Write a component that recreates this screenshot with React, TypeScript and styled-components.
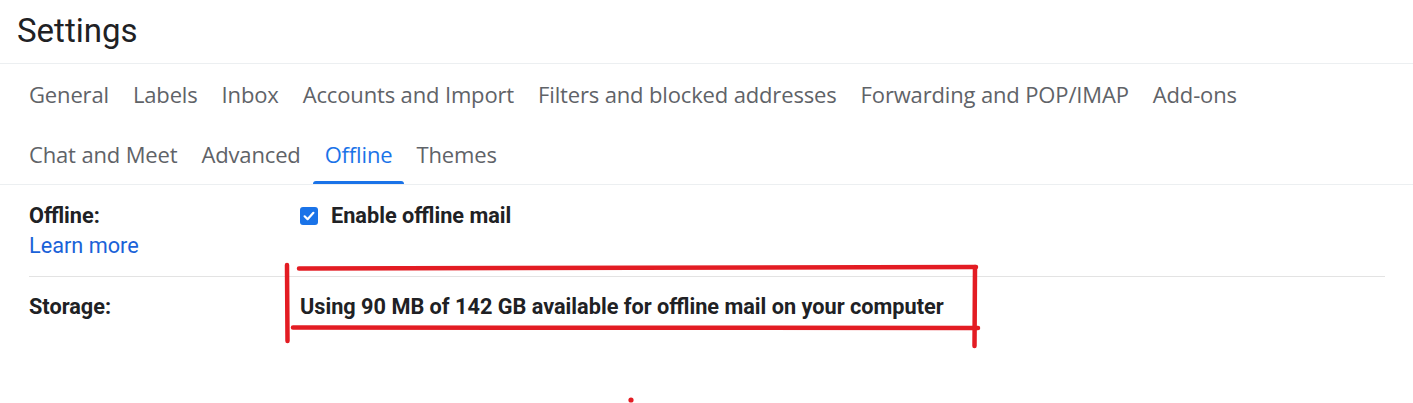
import React from "react";
import styled, { createGlobalStyle } from "styled-components";

const GlobalStyle = createGlobalStyle`
  html, body {
    margin: 0;
    padding: 0;
    background: #ffffff;
  }
  body {
    font-family: Roboto, "Noto Sans", Arial, sans-serif;
    color: #202124;
  }
`;

const Page = styled.div`
  position: relative;
  width: 1413px;
  height: 403px;
  overflow: hidden;
  background: #fff;
`;

const Header = styled.header`
  height: 64px;
  box-sizing: border-box;
  padding: 12px 0 0 17px;
  border-bottom: 1px solid #eceff1;
`;

const Title = styled.h1`
  margin: 0;
  font-family: Roboto, Arial, sans-serif;
  font-weight: 400;
  font-size: 33px;
  line-height: 38px;
  color: #202124;
`;

const TabsBar = styled.nav`
  display: flex;
  flex-direction: column;
  padding-left: 17px;
  border-bottom: 1px solid #eceff1;
`;

const TabRow = styled.div`
  display: flex;
  height: 60px;
`;

const Tab = styled.div<{ $active?: boolean }>`
  position: relative;
  height: 60px;
  padding: 0 12px;
  display: flex;
  align-items: center;
  font-family: "Open Sans", Arial, sans-serif;
  font-size: 22px;
  font-weight: 400;
  letter-spacing: -0.15px;
  color: ${(p) => (p.$active ? "#1a73e8" : "#5f6368")};
  white-space: nowrap;
  &::after {
    content: "";
    display: ${(p) => (p.$active ? "block" : "none")};
    position: absolute;
    left: 0;
    right: 0;
    bottom: 0;
    height: 3px;
    background: #1a73e8;
    border-radius: 3px 3px 0 0;
  }
`;

const Content = styled.section`
  padding: 0 28px 0 29px;
`;

const SettingRow = styled.div<{ $divider?: boolean }>`
  display: grid;
  grid-template-columns: 271px 1fr;
  padding: ${(p) => (p.$divider ? "16px 0 15px" : "15px 0 15px")};
  border-bottom: ${(p) => (p.$divider ? "1.5px solid #e3e3e3" : "none")};
`;

const LabelCol = styled.div`
  display: flex;
  flex-direction: column;
`;

const Label = styled.div`
  font-family: Roboto, Arial, sans-serif;
  font-weight: 700;
  font-size: 21.7px;
  line-height: 30px;
  color: #202124;
`;

const LearnMore = styled.a`
  font-family: Roboto, Arial, sans-serif;
  font-weight: 400;
  font-size: 21.7px;
  line-height: 30px;
  color: #1a62d8;
  text-decoration: none;
`;

const ValueText = styled.div`
  font-family: Roboto, Arial, sans-serif;
  font-weight: 700;
  font-size: 21.7px;
  line-height: 30px;
  color: #202124;
`;

const CheckLine = styled.label`
  display: flex;
  align-items: center;
  gap: 13px;
  height: 30px;
`;

const CheckBox = styled.span`
  width: 18px;
  height: 18px;
  border-radius: 3px;
  background: #1a73e8;
  display: flex;
  align-items: center;
  justify-content: center;
`;

const Annotation = styled.svg`
  position: absolute;
  left: 0;
  top: 0;
  pointer-events: none;
`;

const row1 = [
  "General",
  "Labels",
  "Inbox",
  "Accounts and Import",
  "Filters and blocked addresses",
  "Forwarding and POP/IMAP",
  "Add-ons",
];
const row2 = ["Chat and Meet", "Advanced", "Offline", "Themes"];

export default function App() {
  return (
    <Page>
      <GlobalStyle />
      <Header>
        <Title>Settings</Title>
      </Header>
      <TabsBar>
        <TabRow>
          {row1.map((t) => (
            <Tab key={t}>{t}</Tab>
          ))}
        </TabRow>
        <TabRow>
          {row2.map((t) => (
            <Tab key={t} $active={t === "Offline"}>
              {t}
            </Tab>
          ))}
        </TabRow>
      </TabsBar>
      <Content>
        <SettingRow $divider>
          <LabelCol>
            <Label>Offline:</Label>
            <LearnMore href="#">Learn more</LearnMore>
          </LabelCol>
          <div>
            <CheckLine>
              <CheckBox>
                <svg width="14" height="14" viewBox="0 0 14 14">
                  <path
                    d="M2.6 7.3 L5.6 10.2 L11.4 3.8"
                    fill="none"
                    stroke="#fff"
                    strokeWidth="2.2"
                    strokeLinecap="round"
                    strokeLinejoin="round"
                  />
                </svg>
              </CheckBox>
              <ValueText>Enable offline mail</ValueText>
            </CheckLine>
          </div>
        </SettingRow>
        <SettingRow>
          <LabelCol>
            <Label>Storage:</Label>
          </LabelCol>
          <ValueText>
            Using 90 MB of 142 GB available for offline mail on your computer
          </ValueText>
        </SettingRow>
      </Content>
      <Annotation width="1413" height="403" viewBox="0 0 1413 403">
        <g
          stroke="#e31c23"
          strokeWidth="4.5"
          strokeLinecap="round"
          fill="none"
        >
          <path d="M287 265 L287.5 341" />
          <path d="M299 268.5 L976 267" />
          <path d="M293 327.5 L978 328" />
          <path d="M975 267 L974.5 346" />
        </g>
        <circle cx="631" cy="400" r="2.6" fill="#e31c23" />
      </Annotation>
    </Page>
  );
}
